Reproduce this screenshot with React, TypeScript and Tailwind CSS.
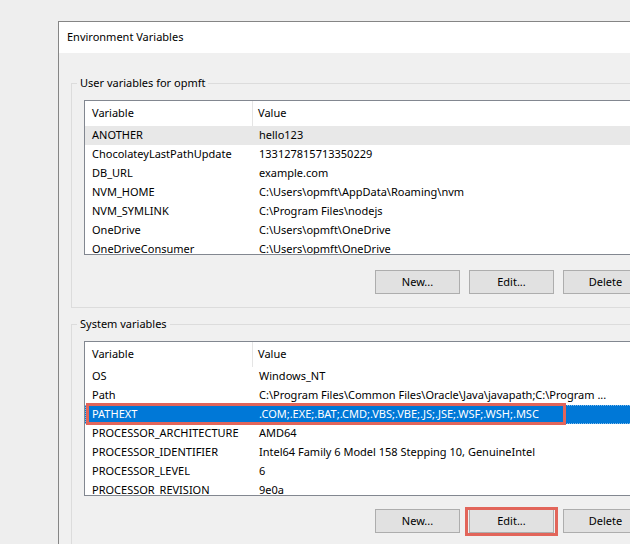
import React from "react";

type Row = [string, string];

const userRows: Row[] = [
  ["ANOTHER", "hello123"],
  ["ChocolateyLastPathUpdate", "133127815713350229"],
  ["DB_URL", "example.com"],
  ["NVM_HOME", "C:\\Users\\opmft\\AppData\\Roaming\\nvm"],
  ["NVM_SYMLINK", "C:\\Program Files\\nodejs"],
  ["OneDrive", "C:\\Users\\opmft\\OneDrive"],
  ["OneDriveConsumer", "C:\\Users\\opmft\\OneDrive"],
];

const sysRows: Row[] = [
  ["OS", "Windows_NT"],
  ["Path", "C:\\Program Files\\Common Files\\Oracle\\Java\\javapath;C:\\Program ..."],
  ["PATHEXT", ".COM;.EXE;.BAT;.CMD;.VBS;.VBE;.JS;.JSE;.WSF;.WSH;.MSC"],
  ["PROCESSOR_ARCHITECTURE", "AMD64"],
  ["PROCESSOR_IDENTIFIER", "Intel64 Family 6 Model 158 Stepping 10, GenuineIntel"],
  ["PROCESSOR_LEVEL", "6"],
  ["PROCESSOR_REVISION", "9e0a"],
];

function Table({
  rows,
  grayIndex,
  blueIndex,
}: {
  rows: Row[];
  grayIndex?: number;
  blueIndex?: number;
}) {
  return (
    <div className="h-[155px] overflow-hidden border border-[#828790] bg-white">
      <div className="flex h-[25px] items-center">
        <div className="flex h-full w-[168px] items-center border-r border-[#e5e5e5] pl-[7px]">Variable</div>
        <div className="pl-[5px]">Value</div>
      </div>
      {rows.map((r, i) => {
        const gray = i === grayIndex;
        const blue = i === blueIndex;
        return (
          <div
            key={r[0]}
            className={
              "relative flex h-[19px] items-center whitespace-nowrap " +
              (gray ? "bg-[#e8e8e8] " : "") +
              (blue ? "bg-[#0078d7] text-white outline-1 outline-dotted outline-offset-[-1px] outline-[#7fbaea] " : "")
            }
          >
            <div className="w-[168px] shrink-0 pl-[7px]">{r[0]}</div>
            <div className="pl-[6px]">{r[1]}</div>
            {blue && (
              <div className="absolute left-[1px] top-[-2px] h-[22px] w-[480px] border-[3px] border-[#e2655a]" />
            )}
          </div>
        );
      })}
    </div>
  );
}

function Btn({ label, highlight }: { label: string; highlight?: boolean }) {
  return (
    <div className="relative">
      <div className="flex h-[24px] w-[85px] items-center justify-center border border-[#adadad] bg-[#e1e1e1]">
        {label}
      </div>
      {highlight && (
        <div className="absolute -left-[4px] -right-[4px] -top-[2px] -bottom-[3px] border-[3px] border-[#e2655a]" />
      )}
    </div>
  );
}

function Group({
  title,
  rows,
  grayIndex,
  blueIndex,
  highlightEdit,
  btnGap,
}: {
  title: string;
  rows: Row[];
  grayIndex?: number;
  blueIndex?: number;
  highlightEdit?: boolean;
  btnGap: string;
}) {
  return (
    <fieldset className="border border-[#dcdcdc]">
      <legend className="ml-[5px] px-[3px] leading-[16px]">{title}</legend>
      <div className="px-[12px] pb-[13px]">
        <div className="mt-[9px]">
          <Table rows={rows} grayIndex={grayIndex} blueIndex={blueIndex} />
        </div>
        <div className={"mr-[3px] flex justify-end gap-[9px] " + btnGap}>
          <Btn label="New..." />
          <Btn label="Edit..." highlight={highlightEdit} />
          <Btn label="Delete" />
        </div>
      </div>
    </fieldset>
  );
}

export default function App() {
  return (
    <div className="h-[544px] w-[630px] overflow-hidden bg-[#eeeeee] pl-[58px] pt-[21px] font-['Noto_Sans',sans-serif] text-[11px] text-black">
      <div className="w-[618px] border-l border-t border-[#858585] bg-[#f0f0f0]">
        <div className="flex h-[31px] items-center bg-white pl-[8px] text-[11px]">Environment Variables</div>
        <div className="px-[12px] pt-[22px]">
          <Group
            title="User variables for opmft"
            rows={userRows}
            grayIndex={0}
            btnGap="mt-[15px]"
          />
          <div className="h-[8px]" />
          <Group
            title="System variables"
            rows={sysRows}
            blueIndex={2}
            highlightEdit
            btnGap="mt-[13px]"
          />
        </div>
      </div>
    </div>
  );
}
